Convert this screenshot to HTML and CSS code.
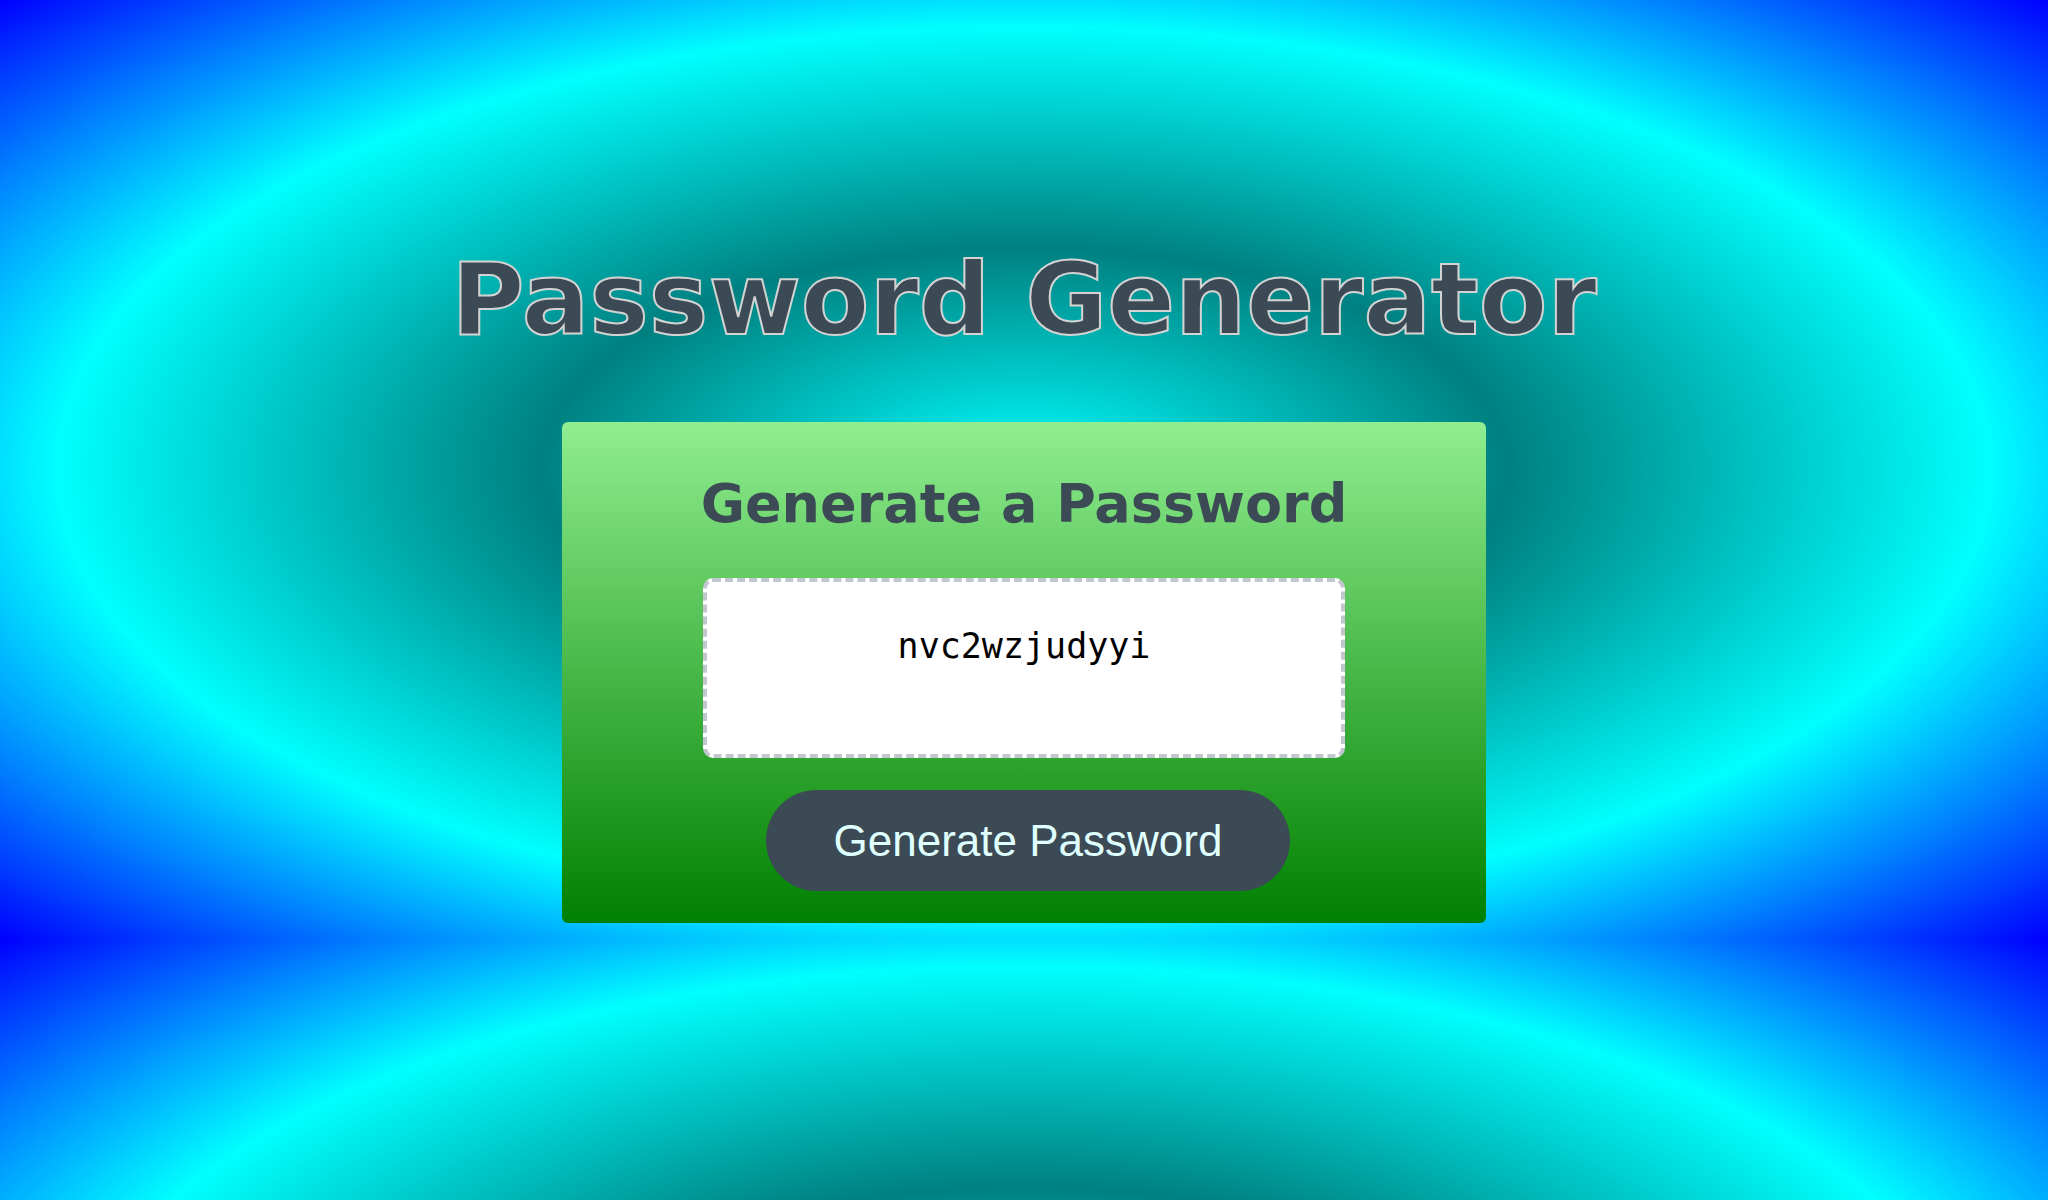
FILE: index.html
```
<!DOCTYPE html>
<html lang="en">
<head>
<meta charset="utf-8">
<title>Password Generator</title>
<link rel="stylesheet" href="styles.css">
</head>
<body>
  <div class="wrapper">
    <header class="page-header">
      <h1 class="title">Password Generator</h1>
    </header>
    <div class="card">
      <div class="card-header">
        <h2 class="card-title">Generate a Password</h2>
      </div>
      <div class="card-body">
        <textarea class="password" readonly aria-label="Generated Password">nvc2wzjudyyi</textarea>
      </div>
      <div class="card-footer">
        <button class="btn" type="button">Generate Password</button>
      </div>
    </div>
  </div>
</body>
</html>
```
FILE: styles.css
```
*, *::before, *::after {
  box-sizing: border-box;
}

html {
  background-image: radial-gradient(cyan, teal, cyan, blue);
  background-size: 100% 939px;
  background-repeat: repeat;
}

body {
  margin: 0;
  font-family: "DejaVu Sans", Verdana, sans-serif;
  color: #3b4a54;
}

.wrapper {
  padding: 242px 20px 16px;
}

.page-header {
  text-align: center;
}

.title {
  margin: 0;
  font-size: 100px;
  line-height: 116px;
  font-weight: bold;
  color: #3b4a54;
  -webkit-text-stroke: 2px #d3d3d3;
}

.card {
  width: 924px;
  margin: 64px auto 0;
  padding-top: 50px;
  border-radius: 6px;
  background: linear-gradient(lightgreen, green);
  text-align: center;
}

.card-title {
  margin: 0 0 43px;
  font-size: 54px;
  line-height: 63px;
  font-weight: bold;
  color: #3b4a54;
}

.password {
  display: block;
  width: 642px;
  height: 180px;
  margin: 0 auto;
  padding: 44px 15px 0;
  border: 4px dashed #c0c7cf;
  border-radius: 10px;
  background: #fff;
  color: #000;
  font-family: "DejaVu Sans Mono", monospace;
  font-size: 35px;
  line-height: normal;
  text-align: center;
  resize: none;
  overflow: hidden;
  outline: none;
}

.card-footer {
  display: flex;
  justify-content: center;
}

.btn {
  margin: 32px 32px 32px 40px;
  padding: 28px 68px;
  border: none;
  border-radius: 51px;
  background-color: #3b4a54;
  color: #e0ffff;
  font-family: "Liberation Sans", Arial, sans-serif;
  font-size: 44px;
  line-height: 45px;
  cursor: pointer;
}
```
